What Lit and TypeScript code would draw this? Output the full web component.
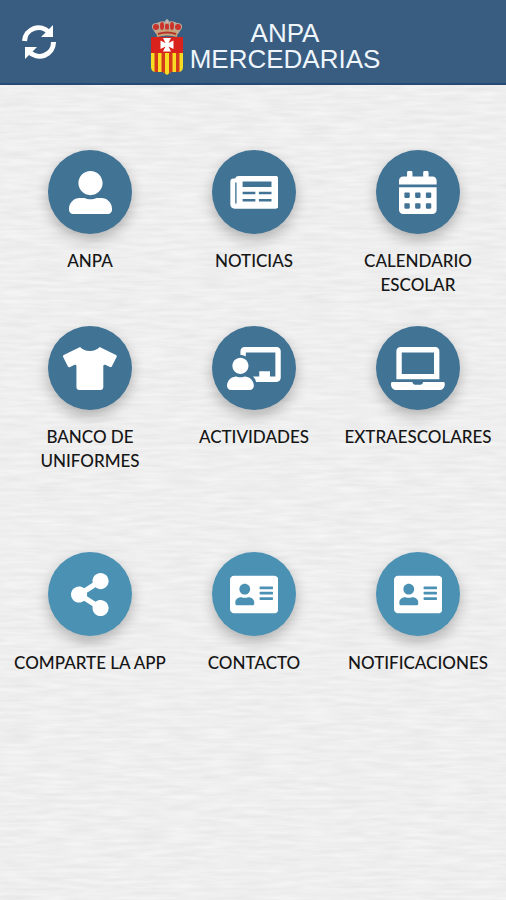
import { LitElement, html, css, svg, type TemplateResult } from "lit";
import { customElement, property } from "lit/decorators.js";

interface Icon {
  width: number;
  path: string;
}

interface Entry {
  label: string;
  icon: Icon;
}

// Every glyph shares a 512 unit height; only the width varies.
const user: Icon = {
  width: 512,
  path: "M256 288c79.5 0 144-64.500 144-144S335.500 0 256 0 112 64.500 112 144s64.500 144 144 144zm128 32h-55.100c-22.200 10.200-46.900 16-72.900 16s-50.600-5.800-72.900-16H128C57.300 320 0 377.300 0 448v16c0 26.500 21.500 48 48 48h416c26.500 0 48-21.500 48-48v-16c0-70.700-57.300-128-128-128z",
};
const newspaper: Icon = {
  width: 576,
  path: "M544 60H100c-20 0-34 12-38 30H40C18 90 4 104 4 126V396c0 32 22 52 52 52h488c20 0 32-12 32-32V92c0-20-12-32-32-32zM62 136h16v252H62zM150 126h344v64H150zM150 248h152v30H150zM344 248h150v30H344zM150 334h152v30H150zM344 334h150v30H344z",
};
const calendar: Icon = {
  width: 448,
  path: "M0 464c0 26.500 21.500 48 48 48h352c26.500 0 48-21.500 48-48V192H0v272zM64 268c0-6.600 5.400-12 12-12h40c6.600 0 12 5.400 12 12v40c0 6.600-5.400 12-12 12H76c-6.600 0-12-5.400-12-12zm128 0c0-6.600 5.400-12 12-12h40c6.600 0 12 5.400 12 12v40c0 6.600-5.400 12-12 12h-40c-6.600 0-12-5.400-12-12zm128 0c0-6.600 5.400-12 12-12h40c6.600 0 12 5.400 12 12v40c0 6.600-5.400 12-12 12h-40c-6.600 0-12-5.400-12-12zM64 396c0-6.600 5.400-12 12-12h40c6.600 0 12 5.400 12 12v40c0 6.600-5.400 12-12 12H76c-6.600 0-12-5.400-12-12zm128 0c0-6.600 5.400-12 12-12h40c6.600 0 12 5.400 12 12v40c0 6.600-5.400 12-12 12h-40c-6.600 0-12-5.400-12-12zm128 0c0-6.600 5.400-12 12-12h40c6.600 0 12 5.400 12 12v40c0 6.600-5.400 12-12 12h-40c-6.600 0-12-5.400-12-12zM400 64h-48V16c0-8.800-7.200-16-16-16h-32c-8.800 0-16 7.200-16 16v48H160V16c0-8.800-7.200-16-16-16h-32c-8.800 0-16 7.200-16 16v48H48C21.500 64 0 85.500 0 112v48h448v-48c0-26.500-21.500-48-48-48z",
};
const shirt: Icon = {
  width: 640,
  path: "M631.2 96.5L436.5 0C416.4 27.8 371.9 47.2 320 47.2S223.6 27.8 203.5 0L8.800 96.5c-7.900 4-11.100 13.600-7.200 21.500l57.200 114.500c4 7.900 13.600 11.100 21.500 7.200l56.600-27.700c10.600-5.200 23 2.500 23 14.400V480c0 17.700 14.300 32 32 32h256c17.700 0 32-14.300 32-32V226.300c0-11.800 12.400-19.600 23-14.400l56.600 27.700c7.900 4 17.500.8 21.500-7.200L638.300 118c4-7.900.8-17.600-7.100-21.500z",
};
const teacher: Icon = {
  width: 640,
  path: "M208 352c-2.390 0-4.780.350-7.060 1.090C187.980 357.300 174.350 360 160 360c-14.350 0-27.980-2.700-40.950-6.910-2.280-.740-4.660-1.090-7.050-1.090C49.940 352-.330 402.480 0 464.620.140 490.880 21.730 512 48 512h224c26.270 0 47.860-21.120 48-47.380.330-62.140-49.940-112.620-112-112.620zm-48-32c53.020 0 96-42.980 96-96s-42.980-96-96-96-96 42.980-96 96 42.980 96 96 96zM592 0H208c-26.470 0-48 22.250-48 49.590V96c23.420 0 45.100 6.780 64 17.800V64h352v288h-64v-64H384v64h-76.240c19.100 16.690 33.120 38.730 39.690 64H592c26.470 0 48-22.250 48-49.590V49.590C640 22.250 618.470 0 592 0z",
};
const laptop: Icon = {
  width: 640,
  path: "M624 416H381.540c-.740 19.810-14.710 32-32.740 32H288c-18.690 0-33.020-17.470-32.770-32H16c-8.800 0-16 7.200-16 16v16c0 35.200 28.800 64 64 64h512c35.200 0 64-28.800 64-64v-16c0-8.800-7.200-16-16-16zM576 48c0-26.400-21.600-48-48-48H112C85.600 0 64 21.600 64 48v336h512V48zm-64 272H128V64h384v256z",
};
const share: Icon = {
  width: 448,
  path: "M352 320c-22.608 0-43.387 7.819-59.790 20.895l-102.486-64.054a96.551 96.551 0 0 0 0-41.683l102.486-64.054C308.613 184.181 329.392 192 352 192c53.019 0 96-42.981 96-96S405.019 0 352 0s-96 42.981-96 96c0 7.158.790 14.130 2.276 20.841L155.790 180.895C139.387 167.819 118.608 160 96 160c-53.019 0-96 42.981-96 96s42.981 96 96 96c22.608 0 43.387-7.819 59.790-20.895l102.486 64.054A96.301 96.301 0 0 0 256 416c0 53.019 42.981 96 96 96s96-42.981 96-96-42.981-96-96-96z",
};
const card: Icon = {
  width: 576,
  path: "M528 32H48C21.500 32 0 53.500 0 80v352c0 26.500 21.500 48 48 48h480c26.500 0 48-21.500 48-48V80c0-26.500-21.500-48-48-48zm-352 96c35.300 0 64 28.700 64 64s-28.700 64-64 64-64-28.700-64-64 28.700-64 64-64zm112 236.800c0 10.600-10 19.200-22.400 19.200H86.400C74 384 64 375.400 64 364.800v-19.200c0-31.800 30.100-57.600 67.200-57.600h5c12.300 5.100 25.700 8 39.800 8s27.600-2.900 39.800-8h5c37.100 0 67.200 25.800 67.200 57.600v19.200zM512 312c0 4.400-3.600 8-8 8H360c-4.400 0-8-3.600-8-8v-16c0-4.400 3.600-8 8-8h144c4.400 0 8 3.600 8 8v16zm0-64c0 4.400-3.600 8-8 8H360c-4.400 0-8-3.600-8-8v-16c0-4.400 3.600-8 8-8h144c4.400 0 8 3.600 8 8v16zm0-64c0 4.400-3.600 8-8 8H360c-4.400 0-8-3.600-8-8v-16c0-4.400 3.600-8 8-8h144c4.400 0 8 3.600 8 8v16z",
};

const sections: Entry[] = [
  { label: "ANPA", icon: user },
  { label: "NOTICIAS", icon: newspaper },
  { label: "CALENDARIO ESCOLAR", icon: calendar },
  { label: "BANCO DE UNIFORMES", icon: shirt },
  { label: "ACTIVIDADES", icon: teacher },
  { label: "EXTRAESCOLARES", icon: laptop },
];

const tools: Entry[] = [
  { label: "COMPARTE LA APP", icon: share },
  { label: "CONTACTO", icon: card },
  { label: "NOTIFICACIONES", icon: card },
];

@customElement("menu-tile")
class MenuTile extends LitElement {
  @property({ attribute: false }) entry!: Entry;

  static styles = css`
    :host {
      display: block;
    }
    .tile {
      display: flex;
      flex-direction: column;
      align-items: center;
      gap: 15px;
      color: #161616;
      text-decoration: none;
    }
    .disc {
      display: grid;
      place-items: center;
      width: 84px;
      height: 84px;
      border-radius: 50%;
      background: var(--disc, #407394);
      box-shadow: 0 6px 14px rgba(0, 0, 0, 0.26);
    }
    .glyph {
      display: block;
      height: 43px;
      fill: #fff;
    }
    .label {
      padding: 0 4px;
      font: 500 17px/24px Lato, "Noto Sans", sans-serif;
      text-align: center;
    }
  `;

  render() {
    const { label, icon } = this.entry;
    return html`<a class="tile" href="#">
      <span class="disc">
        <svg class="glyph" viewBox="0 0 ${icon.width} 512" aria-hidden="true">
          <path fill-rule="evenodd" d=${icon.path}></path>
        </svg>
      </span>
      <span class="label">${label}</span>
    </a>`;
  }
}

const crest: TemplateResult = html`<svg class="crest" viewBox="0 0 34 56" aria-hidden="true">
  <path d="M6 15 2 9Q1 4 7 4 11 1 17 3 23 1 27 4 33 4 32 9L28 15Z" fill="#b9aa9a" />
  <g fill="#c9332b">
    <ellipse cx="6" cy="8" rx="3" ry="3" />
    <ellipse cx="12" cy="7" rx="2" ry="4" />
    <ellipse cx="22" cy="7" rx="2" ry="4" />
    <ellipse cx="28" cy="8" rx="3" ry="3" />
    <ellipse cx="17" cy="8" rx="2" ry="4" />
  </g>
  <path d="M17 0v5M15 2h4" stroke="#d8d4c4" stroke-width="1" />
  <path d="M6 12Q17 9 28 12L27 18Q17 15 7 18Z" fill="#c9a277" />
  <path d="M8 15Q17 12 26 15" fill="none" stroke="#b6322c" stroke-width="2" />
  <path d="M1 18H33V34H1Z" fill="#d9221c" />
  <path d="M1 34H33V48Q33 53 28 53H21L17 56 13 53H6Q1 53 1 48Z" fill="#f8dc22" />
  <path d="M4.500 34h3.500v19H6q-1 0-1.500-.5zM11.500 34H15v20.500L13 53h-1.500zM19 34h3.500v19H21l-2 1.500zM26 34h3.500v18.500L28 53h-2z" fill="#d33a1c" />
  <path d="M13 19h8l-2.500 5 5-2.500v8.500l-5-2.500 2.500 5h-8l2.500-5-5 2.500v-8.500l5 2.500z" fill="#fff" />
</svg>`;

// Horizontally stretched noise gives the ribbed paper.
const paper = svg`
  <filter id="ribs" x="0" y="0" width="100%" height="100%" color-interpolation-filters="sRGB">
    <feTurbulence type="fractalNoise" baseFrequency="0.03 0.26" numOctaves="2" seed="8" />
    <feColorMatrix values="0.07 0 0 0 0.9  0.07 0 0 0 0.9  0.07 0 0 0 0.9  0 0 0 0 1" />
  </filter>
  <rect width="100%" height="100%" filter="url(#ribs)" />`;

@customElement("app-root")
class AppRoot extends LitElement {
  static styles = css`
    :host {
      display: flex;
      flex-direction: column;
      position: relative;
      isolation: isolate;
      min-height: 100vh;
      background: #efefef;
    }
    .paper {
      position: absolute;
      inset: 0;
      z-index: -1;
      width: 100%;
      height: 100%;
    }
    .bar {
      display: flex;
      align-items: center;
      box-sizing: border-box;
      height: 85px;
      padding: 0 32px 0 22px;
      border-bottom: 2px solid #244a75;
      background: #395c81;
    }
    .refresh {
      padding: 0;
      border: 0;
      background: none;
      cursor: pointer;
    }
    .arrows {
      display: block;
      width: 34px;
      height: 34px;
    }
    .brand {
      display: flex;
      flex: 1;
      align-items: center;
      justify-content: center;
      gap: 6px;
      padding-top: 10px;
    }
    .crest {
      display: block;
      width: 34px;
      height: 56px;
    }
    .name {
      margin: 0;
      padding-bottom: 2px;
      color: #eef6fc;
      font: 400 26px/26px "Liberation Sans", Arial, sans-serif;
      text-align: center;
    }
    .menu {
      display: flex;
      flex-direction: column;
      gap: 79px;
      padding: 65px 6px 24px 8px;
    }
    .grid {
      display: grid;
      grid-template-columns: repeat(3, minmax(0, 1fr));
      row-gap: 29px;
    }
    .tools {
      --disc: #4a91b4;
    }
  `;

  render() {
    return html`
      <svg class="paper" aria-hidden="true">${paper}</svg>
      <header class="bar">
        <button class="refresh" type="button" aria-label="Actualizar">
          <svg class="arrows" viewBox="0 0 34 34" aria-hidden="true">
            <g fill="none" stroke="#fff" stroke-width="5">
              <path d="M2.500 16A14 14 0 0 1 27 7.500" />
              <path d="M31.500 17A14 14 0 0 1 7 26.500" />
            </g>
            <path d="M31 0v12H19zM3 34V22h12z" fill="#fff" />
          </svg>
        </button>
        <div class="brand">
          ${crest}
          <h1 class="name">ANPA<br />MERCEDARIAS</h1>
        </div>
      </header>
      <main class="menu">
        <nav class="grid" aria-label="Secciones">
          ${sections.map((entry) => html`<menu-tile .entry=${entry}></menu-tile>`)}
        </nav>
        <nav class="grid tools" aria-label="Herramientas">
          ${tools.map((entry) => html`<menu-tile .entry=${entry}></menu-tile>`)}
        </nav>
      </main>
    `;
  }
}
